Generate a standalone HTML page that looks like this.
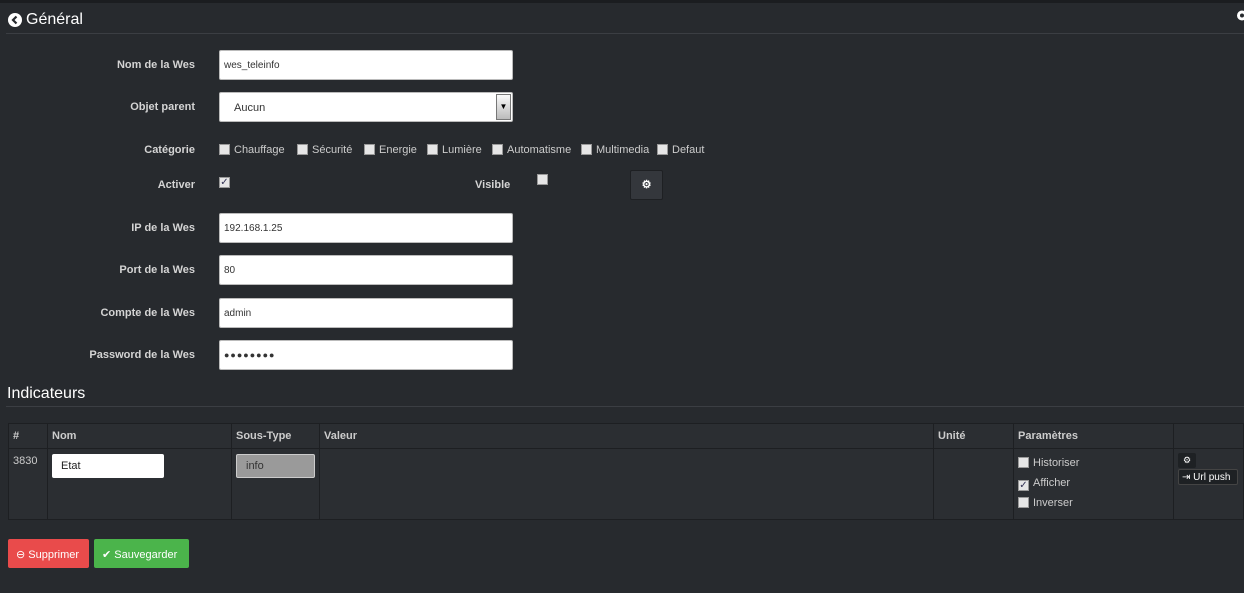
<!DOCTYPE html>
<html><head><meta charset="utf-8"><style>
*{box-sizing:border-box;margin:0;padding:0}
body{width:1244px;height:593px;background:#272a2e;font-family:"Liberation Sans",sans-serif;color:#d0d0d0;position:relative;overflow:hidden;font-size:11px}
.a{position:absolute}
.lbl{position:absolute;right:1049px;font-weight:bold;font-size:11px;color:#d4d4d4;white-space:nowrap}
.inp{position:absolute;left:219px;width:294px;height:30px;background:#fff;border:1px solid #bbb;border-radius:2px;color:#333;font-size:10px;padding:9px 0 0 4px}
.cb{display:inline-block;width:11px;height:11px;background:#e6e6e6;border:1px solid #999;vertical-align:-2px;margin-right:4px}
.cat{position:absolute;top:144px;font-size:11px;color:#ccc;white-space:nowrap}
table{position:absolute;left:8px;top:423px;width:1236px;border-collapse:collapse;background:#2b2e32}
td,th{border:1px solid #1d1f22;text-align:left;vertical-align:top;font-size:11px;color:#ccc}
th{height:25px;padding:6px 4px;font-weight:bold}
td{height:69px;padding:6px 4px}
.btn{position:absolute;top:539px;height:29px;border-radius:2px;color:#fff;font-size:11px;padding:9px 0 0 8px}
</style></head><body>
<div class="a" style="left:0;top:0;width:1244px;height:3px;background:#1b1d20"></div>
<svg class="a" style="left:8px;top:13px" width="14" height="14" viewBox="0 0 14 14"><circle cx="7" cy="7" r="7" fill="#fff"/><path d="M8.5 3.5L5 7l3.5 3.5" stroke="#272a2e" stroke-width="2.2" fill="none"/></svg>
<div class="a" style="left:26px;top:11px;font-size:16px;color:#fff">Général</div>
<svg class="a" style="left:1235px;top:9px" width="12" height="13" viewBox="0 0 12 13"><circle cx="7" cy="6.5" r="5" fill="#fff"/><circle cx="7" cy="6.5" r="2" fill="#272a2e"/></svg>
<div class="a" style="left:6px;top:33px;width:1238px;height:1px;background:#3b3e43"></div>

<div class="lbl" style="top:59px">Nom de la Wes</div><div class="inp" style="top:50px">wes_teleinfo</div>
<div class="lbl" style="top:101px">Objet parent</div><div class="inp" style="top:92px;padding:9px 0 0 14px;font-size:11px">Aucun
<div class="a" style="right:1px;top:1px;width:15px;height:26px;background:linear-gradient(#fafafa,#bbb);border:1px solid #777;font-size:8px;color:#000;text-align:center;line-height:24px">▼</div></div>
<div class="lbl" style="top:144px">Catégorie</div>
<div class="cat" style="left:219px"><span class="cb"></span>Chauffage</div>
<div class="cat" style="left:297px"><span class="cb"></span>Sécurité</div>
<div class="cat" style="left:364px"><span class="cb"></span>Energie</div>
<div class="cat" style="left:427px"><span class="cb"></span>Lumière</div>
<div class="cat" style="left:492px"><span class="cb"></span>Automatisme</div>
<div class="cat" style="left:581px"><span class="cb"></span>Multimedia</div>
<div class="cat" style="left:657px"><span class="cb"></span>Defaut</div>
<div class="lbl" style="top:179px">Activer</div>
<div class="a" style="left:219px;top:174px"><span class="cb" style="font-size:10px;line-height:9px;color:#335;text-align:center">✓</span></div>
<div class="a" style="left:475px;top:179px;font-weight:bold;color:#d4d4d4">Visible</div>
<div class="a" style="left:537px;top:174px"><span class="cb"></span></div>
<div class="a" style="left:630px;top:170px;width:33px;height:30px;background:#34373c;border:1px solid #1e2023;border-radius:2px;color:#fff;font-size:11px;font-weight:bold;text-align:center;line-height:28px">⚙</div>
<div class="lbl" style="top:222px">IP de la Wes</div><div class="inp" style="top:213px">192.168.1.25</div>
<div class="lbl" style="top:264px">Port de la Wes</div><div class="inp" style="top:255px">80</div>
<div class="lbl" style="top:307px">Compte de la Wes</div><div class="inp" style="top:298px">admin</div>
<div class="lbl" style="top:349px">Password de la Wes</div><div class="inp" style="top:340px;font-size:9px;letter-spacing:1px">●●●●●●●●</div>

<div class="a" style="left:7px;top:385px;font-size:16px;color:#fff">Indicateurs</div>
<div class="a" style="left:6px;top:406px;width:1238px;height:1px;background:#3b3e43"></div>
<table>
<tr><th style="width:39px">#</th><th style="width:184px">Nom</th><th style="width:88px">Sous-Type</th><th style="width:614px">Valeur</th><th style="width:80px">Unité</th><th style="width:160px">Paramètres</th><th></th></tr>
<tr><td style="font-weight:normal">3830</td>
<td><div style="width:112px;height:24px;background:#fff;border-radius:2px;color:#222;padding:6px 0 0 9px;margin-top:-1px">Etat</div></td>
<td><div style="width:79px;height:24px;background:#9a9a9a;border:1px solid #ccc;border-radius:2px;color:#333;padding:5px 0 0 9px;margin-top:-1px">info</div></td>
<td></td><td></td>
<td style="line-height:20px;padding-top:4px"><span class="cb"></span>Historiser<br><span class="cb" style="font-size:10px;line-height:9px;color:#335;text-align:center">✓</span>Afficher<br><span class="cb"></span>Inverser</td>
<td style="padding-top:4px"><div style="width:18px;height:15px;background:#1e2124;border-radius:2px;color:#fff;font-size:9px;text-align:center;line-height:15px">⚙</div><div style="width:60px;height:16px;background:#1e2124;border:1px solid #444;border-radius:2px;color:#fff;font-size:10px;padding:2px 0 0 3px;margin-top:1px">⇥ Url push</div></td></tr>
</table>
<div class="btn" style="left:8px;width:81px;background:#e94b4b">⊖ Supprimer</div>
<div class="btn" style="left:94px;width:95px;background:#4bb44b">✔ Sauvegarder</div>
</body></html>
